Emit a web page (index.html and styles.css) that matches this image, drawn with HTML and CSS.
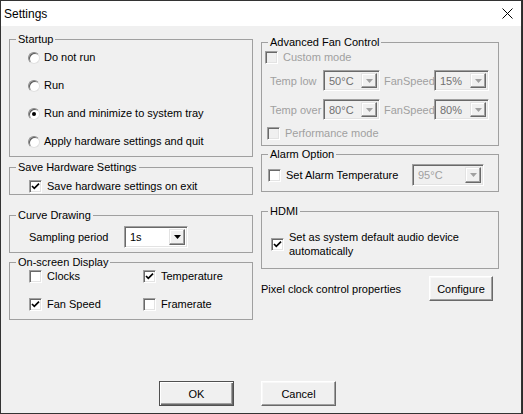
FILE: index.html
```html
<!DOCTYPE html>
<html lang="en">
<head>
<meta charset="utf-8">
<title>Settings</title>
<link rel="stylesheet" href="styles.css">
</head>
<body>
<div class="window">
  <div class="titlebar">
    <span class="title">Settings</span>
    <svg class="close" width="11" height="11" viewBox="0 0 11 11"><path d="M0.5 0.5 L10.5 10.5 M10.5 0.5 L0.5 10.5" stroke="#000" stroke-width="1" fill="none"/></svg>
  </div>
  <div class="content">
    <div class="col col-left">
      <fieldset class="group startup">
        <legend>Startup</legend>
        <div class="radios">
          <div class="opt"><span class="radio"></span><span>Do not run</span></div>
          <div class="opt"><span class="radio"></span><span>Run</span></div>
          <div class="opt"><span class="radio checked"></span><span>Run and minimize to system tray</span></div>
          <div class="opt"><span class="radio"></span><span>Apply hardware settings and quit</span></div>
        </div>
      </fieldset>
      <fieldset class="group savehw">
        <legend>Save Hardware Settings</legend>
        <div class="savehw-body">
          <div class="opt"><span class="cb"><svg width="9" height="9" viewBox="0 0 9 9"><path d="M1 4 L3.3 6.3 L8 1.6" stroke="#000" stroke-width="1.7" fill="none"/></svg></span><span>Save hardware settings on exit</span></div>
        </div>
      </fieldset>
      <fieldset class="group curve">
        <legend>Curve Drawing</legend>
        <div class="row">
          <span class="lbl-sampling">Sampling period</span>
          <div class="combo w64"><span class="val">1s</span><span class="dd"><svg width="7" height="4" viewBox="0 0 7 4"><polygon points="0,0 7,0 3.5,4" fill="#000"/></svg></span></div>
        </div>
      </fieldset>
      <fieldset class="group osd">
        <legend>On-screen Display</legend>
        <div class="osd-grid">
          <div class="opt"><span class="cb"></span><span>Clocks</span></div>
          <div class="opt"><span class="cb"><svg width="9" height="9" viewBox="0 0 9 9"><path d="M1 4 L3.3 6.3 L8 1.6" stroke="#000" stroke-width="1.7" fill="none"/></svg></span><span>Temperature</span></div>
          <div class="opt"><span class="cb"><svg width="9" height="9" viewBox="0 0 9 9"><path d="M1 4 L3.3 6.3 L8 1.6" stroke="#000" stroke-width="1.7" fill="none"/></svg></span><span>Fan Speed</span></div>
          <div class="opt"><span class="cb"></span><span>Framerate</span></div>
        </div>
      </fieldset>
    </div>
    <div class="col col-right">
      <fieldset class="group afc">
        <legend>Advanced Fan Control</legend>
        <div class="opt disabled custom"><span class="cb off"></span><span>Custom mode</span></div>
        <div class="fanrow r1">
          <span class="lbl-temp">Temp low</span>
          <div class="combo off w57"><span class="val">50°C</span><span class="dd"><svg width="7" height="4" viewBox="0 0 7 4"><polygon points="0,0 7,0 3.5,4" fill="#a0a0a0"/></svg></span></div>
          <span class="lbl-fan">FanSpeed</span>
          <div class="combo off w55"><span class="val">15%</span><span class="dd"><svg width="7" height="4" viewBox="0 0 7 4"><polygon points="0,0 7,0 3.5,4" fill="#a0a0a0"/></svg></span></div>
        </div>
        <div class="fanrow r2">
          <span class="lbl-temp">Temp over</span>
          <div class="combo off w57"><span class="val">80°C</span><span class="dd"><svg width="7" height="4" viewBox="0 0 7 4"><polygon points="0,0 7,0 3.5,4" fill="#a0a0a0"/></svg></span></div>
          <span class="lbl-fan">FanSpeed</span>
          <div class="combo off w55"><span class="val">80%</span><span class="dd"><svg width="7" height="4" viewBox="0 0 7 4"><polygon points="0,0 7,0 3.5,4" fill="#a0a0a0"/></svg></span></div>
        </div>
        <div class="opt disabled perf"><span class="cb off"></span><span>Performance mode</span></div>
      </fieldset>
      <fieldset class="group alarm">
        <legend>Alarm Option</legend>
        <div class="row">
          <span class="cb"></span>
          <span class="lbl-alarm">Set Alarm Temperature</span>
          <div class="combo off light w72"><span class="val">95°C</span><span class="dd"><svg width="7" height="4" viewBox="0 0 7 4"><polygon points="0,0 7,0 3.5,4" fill="#a0a0a0"/></svg></span></div>
        </div>
      </fieldset>
      <fieldset class="group hdmi">
        <legend>HDMI</legend>
        <div class="hdmi-body">
          <div class="opt hdmi-opt"><span class="cb"><svg width="9" height="9" viewBox="0 0 9 9"><path d="M1 4 L3.3 6.3 L8 1.6" stroke="#000" stroke-width="1.7" fill="none"/></svg></span><span class="hdmi-text">Set as system default audio device automatically</span></div>
        </div>
      </fieldset>
      <div class="pixel-row">
        <span>Pixel clock control properties</span>
        <button class="btn configure" type="button">Configure</button>
      </div>
    </div>
  </div>
  <div class="actions">
    <button class="btn default" type="button">OK</button>
    <button class="btn" type="button">Cancel</button>
  </div>
</div>
</body>
</html>
```
FILE: styles.css
```css
* { box-sizing: border-box; }
html, body { margin: 0; padding: 0; }
html { background: #2b2b2b; }
body {
  width: 523px;
  height: 414px;
  font-family: "Liberation Sans", Arial, sans-serif;
  font-size: 11px;
  color: #000;
}
.window {
  width: 522px;
  height: 414px;
  border: 1px solid #333;
  background: #f0f0f0;
  display: flex;
  flex-direction: column;
}
.titlebar {
  height: 25px;
  flex: 0 0 25px;
  background: #fff;
  display: flex;
  align-items: center;
  justify-content: space-between;
  padding: 0 8px 0 3px;
  font-size: 12px;
}
.close { display: block; }

.content {
  display: grid;
  grid-template-columns: 244px 238px;
  column-gap: 8px;
  padding: 7px 0 0 8px;
  align-items: start;
}
.col { display: flex; flex-direction: column; }
.col-right { margin-top: 3px; }

.group {
  margin: 0;
  padding: 0;
  border: 1px solid #a0a0a0;
  min-width: 0;
}
.group legend {
  padding: 0 2px;
  margin-left: 6px;
  line-height: 13px;
}

.opt { display: flex; align-items: center; gap: 4px; height: 13px; line-height: 13px; white-space: nowrap; }
.disabled { color: #a0a0a0; }

/* radio */
.radio {
  width: 12px;
  height: 12px;
  flex: 0 0 12px;
  border-radius: 50%;
  background: #fff;
  border: 1px solid;
  border-color: #8a8a8a #e0e0e0 #e0e0e0 #8a8a8a;
  box-shadow: inset 1px 1px 0 #5a5a5a;
  display: flex;
  align-items: center;
  justify-content: center;
}
.radio.checked::after {
  content: "";
  width: 4px;
  height: 4px;
  border-radius: 50%;
  background: #000;
}

/* checkbox */
.cb {
  width: 13px;
  height: 13px;
  flex: 0 0 13px;
  background: #fff;
  border: 1px solid;
  border-color: #a0a0a0 #fff #fff #a0a0a0;
  box-shadow: inset 1px 1px 0 #696969, inset -1px -1px 0 #e3e3e3;
  display: flex;
  align-items: center;
  justify-content: center;
}
.cb svg { display: block; }
.cb.off { background: #f0f0f0; }

/* combo */
.combo {
  display: flex;
  height: 22px;
  background: #fff;
  border: 1px solid;
  border-color: #a0a0a0 #fff #fff #a0a0a0;
  box-shadow: inset 1px 1px 0 #696969, inset -1px -1px 0 #e3e3e3;
  padding: 2px;
}
.combo .val { flex: 1; padding-left: 3px; line-height: 16px; }
.combo .dd {
  width: 16px;
  flex: 0 0 16px;
  background: #f0f0f0;
  border: 1px solid;
  border-color: #e3e3e3 #696969 #696969 #e3e3e3;
  box-shadow: inset -1px -1px 0 #a0a0a0, inset 1px 1px 0 #fff;
  display: flex;
  align-items: center;
  justify-content: center;
}
.combo .dd svg { display: block; }
.combo.off { background: #f0f0f0; color: #707070; height: 21px; }
.combo.off.light { color: #a0a0a0; height: 22px; }
.w64 { width: 64px; }
.w57 { width: 57px; }
.w55 { width: 55px; }
.w72 { width: 72px; }

/* left groups */
.startup { height: 124px; }
.radios { display: flex; flex-direction: column; gap: 15px; padding: 5px 0 0 18px; }
.savehw { height: 34px; margin-top: 4px; }
.savehw-body { padding: 6px 0 0 19px; }
.savehw .opt { gap: 5px; }
.curve { height: 44px; margin-top: 14px; }
.row { display: flex; align-items: center; }
.curve .row { padding: 4px 0 0 19px; height: 26px; }
.lbl-sampling { width: 95px; }
.osd { height: 64px; margin-top: 3px; }
.osd-grid {
  display: grid;
  grid-template-columns: 114px auto;
  row-gap: 15px;
  padding: 1px 0 0 19px;
}
.osd-grid .opt { gap: 5px; }

/* right groups */
.afc { height: 110px; }
.afc .custom { padding-left: 3px; margin-top: 2px; gap: 5px; }
.fanrow { display: flex; align-items: center; padding-left: 8px; }
.fanrow.r1 { margin-top: 6px; }
.fanrow.r2 { margin-top: 8px; }
.lbl-temp { width: 53px; color: #a0a0a0; }
.lbl-fan { width: 50px; margin-left: 4px; color: #a0a0a0; }
.afc .perf { padding-left: 5px; margin-top: 7px; gap: 5px; }

.alarm { height: 44px; margin-top: 2px; }
.alarm .row { padding: 3px 0 0 6px; height: 25px; }
.lbl-alarm { width: 131px; padding-left: 5px; }

.hdmi { height: 64px; margin-top: 13px; }
.hdmi-body { padding: 12px 0 0 9px; }
.hdmi-opt { height: auto; gap: 5px; white-space: normal; }
.hdmi-text { width: 200px; line-height: 14px; }

.pixel-row {
  display: flex;
  align-items: center;
  justify-content: space-between;
  margin-top: 7px;
  padding-right: 6px;
  height: 25px;
}

/* buttons */
.btn {
  width: 75px;
  height: 25px;
  padding: 0;
  margin: 0;
  font-family: inherit;
  font-size: 11px;
  color: #000;
  background: #f0f0f0;
  border: 1px solid;
  border-color: #fff #696969 #696969 #fff;
  box-shadow: inset -1px -1px 0 #a0a0a0, inset 1px 1px 0 #f8f8f8;
}
.btn.configure { width: 64px; }
.btn.default {
  border-color: #505050;
  box-shadow: inset 1px 1px 0 #fff, inset -1px -1px 0 #696969, inset -2px -2px 0 #a0a0a0;
}
.actions {
  display: flex;
  gap: 27px;
  margin-top: 61px;
  padding-left: 158px;
}
```
